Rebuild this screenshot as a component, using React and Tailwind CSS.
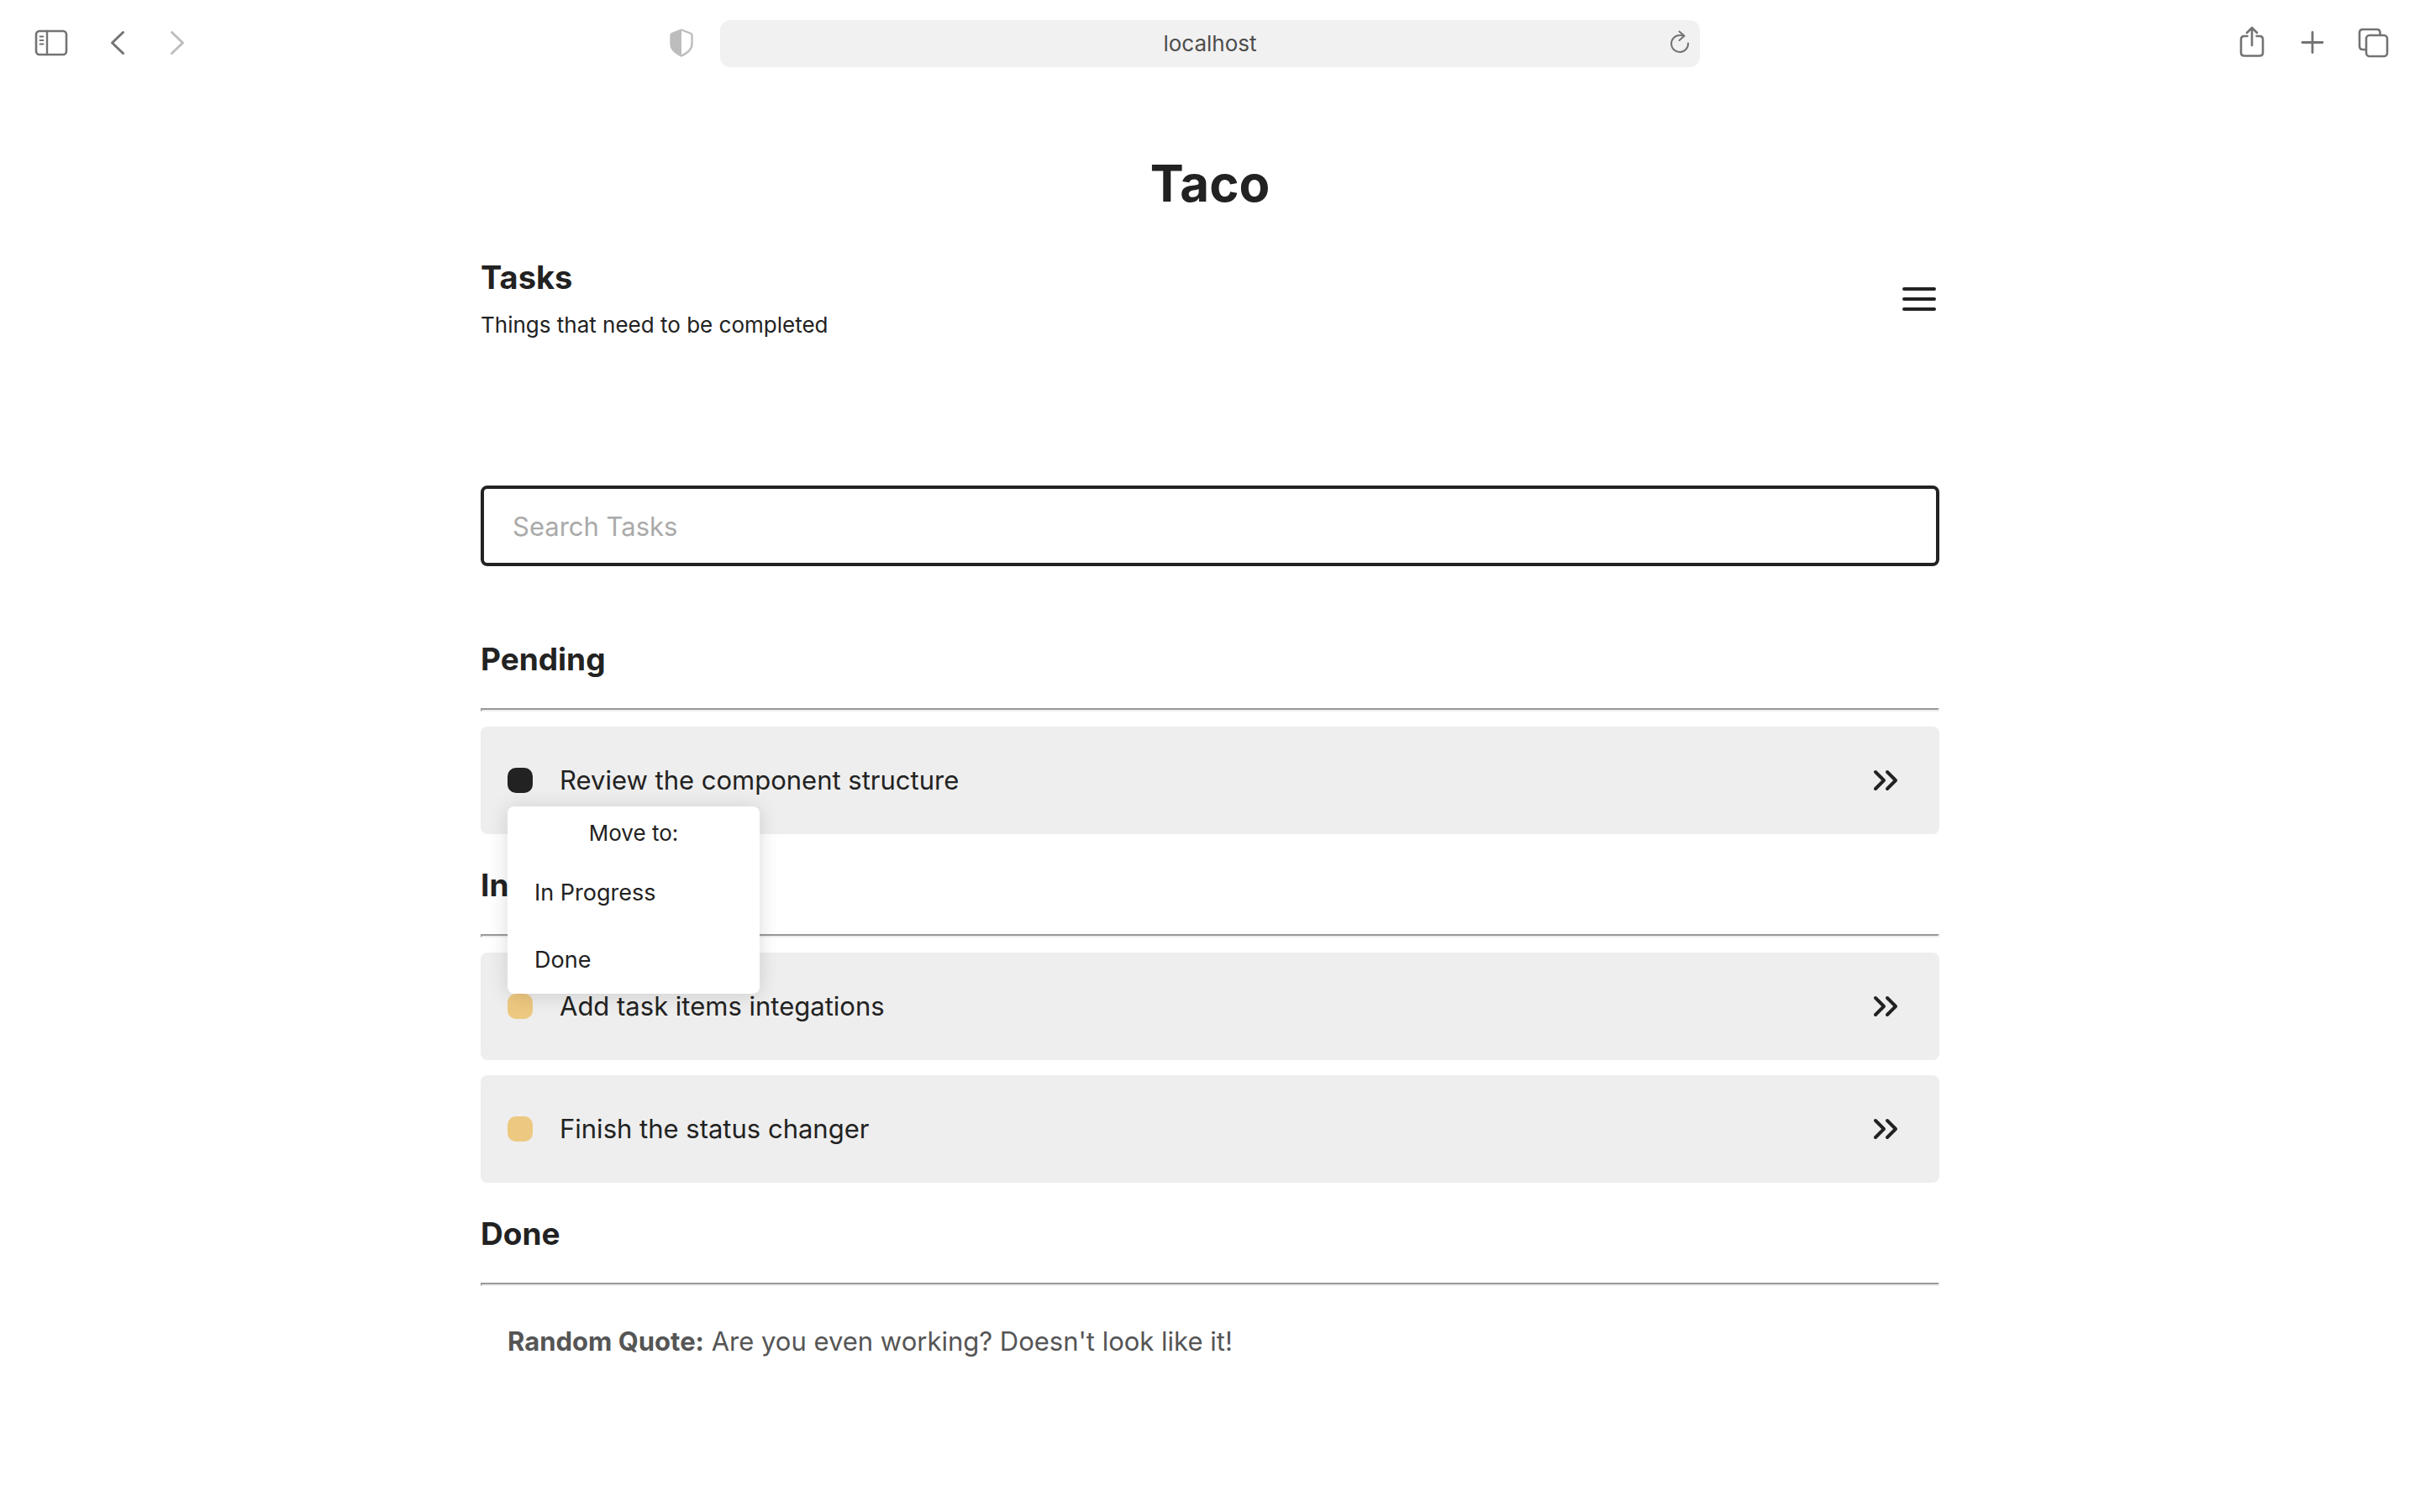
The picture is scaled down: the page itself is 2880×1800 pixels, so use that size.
import { ChevronsRight } from "lucide-react";

function ToolButton({ label, className = "", children }) {
  return (
    <button type="button" aria-label={label} className={`flex shrink-0 items-center justify-center ${className}`}>
      {children}
    </button>
  );
}

function BrowserBar() {
  return (
    <header className="grid h-[104px] grid-cols-[1fr_minmax(0,1166px)_1fr] items-center text-[#737373]">
      <div className="flex items-center gap-[31px] pb-[2px] pl-[33px]">
        <ToolButton label="Show sidebar" className="size-14">
          <svg width="40" height="32" viewBox="0 0 40 32" fill="none" stroke="currentColor" strokeLinecap="round">
            <rect x="2" y="2" width="36" height="28" rx="4" strokeWidth="2.6" />
            <path d="M15 2v28" strokeWidth="2.4" />
            <path d="M6.500 8.500h4M6.500 13h4M6.500 17.500h4" strokeWidth="1.8" />
          </svg>
        </ToolButton>
        <ToolButton label="Back" className="h-14 w-10">
          <svg width="20" height="32" viewBox="0 0 20 32" fill="none" stroke="currentColor" strokeWidth="3" strokeLinecap="round" strokeLinejoin="round">
            <path d="M16.500 3.500 3.500 16l13 12.500" />
          </svg>
        </ToolButton>
        <ToolButton label="Forward" className="h-14 w-10 text-[#bdbdbd]">
          <svg width="20" height="32" viewBox="0 0 20 32" fill="none" stroke="currentColor" strokeWidth="3" strokeLinecap="round" strokeLinejoin="round">
            <path d="M3.500 3.500 16.500 16l-13 12.500" />
          </svg>
        </ToolButton>
        <ToolButton label="Privacy report" className="mr-5 ml-auto size-13 text-[#bdbdbd]">
          <svg width="28" height="34" viewBox="0 0 28 34">
            <path d="M14 1.500 25.500 6q1 .500 1 2V18c0 7-5 10.500-12.500 14.500C6.500 28.500 1.500 25 1.500 18V8q0-1.500 1-2Z" fill="none" stroke="currentColor" strokeWidth="2.400" strokeLinejoin="round" />
            <path d="M14 1.500 2.500 6q-1 .500-1 2V18c0 7 5 10.500 12.500 14.500Z" fill="currentColor" />
          </svg>
        </ToolButton>
      </div>
      <div className="relative">
        <input
          type="text"
          aria-label="Address"
          defaultValue="localhost"
          className="block h-14 w-full rounded-xl bg-[#f1f1f1] pb-[2px] text-center text-[26px] text-[#4d4d4d] outline-none"
        />
        <ToolButton label="Reload" className="absolute inset-y-0 right-1 w-10">
          <svg width="24" height="32" viewBox="0 0 24 32" fill="none" stroke="currentColor" strokeWidth="2" strokeLinecap="round" strokeLinejoin="round">
            <path d="M22 15.500A10 10 0 1 1 12 6q2.500 0 5 .600" />
            <path d="m11.500 1.500 6 5.200-6 5.300" />
          </svg>
        </ToolButton>
      </div>
      <div className="flex items-center justify-end gap-4 pr-7 pb-[2px]">
        <ToolButton label="Share" className="size-14">
          <svg width="32" height="40" viewBox="0 0 32 40" fill="none" stroke="currentColor" strokeWidth="2.600" strokeLinecap="round" strokeLinejoin="round">
            <path d="M10.500 12H7q-4 0-4 4v15.500q0 4 4 4h18q4 0 4-4V16q0-4-4-4h-3.500" />
            <path d="M16 23V2.500M10 8l6-6 6 6" />
          </svg>
        </ToolButton>
        <ToolButton label="New tab" className="size-14">
          <svg width="32" height="32" viewBox="0 0 32 32" fill="none" stroke="currentColor" strokeWidth="2.800" strokeLinecap="round">
            <path d="M16 3.500v24M4 15.500h24" />
          </svg>
        </ToolButton>
        <ToolButton label="Show all tabs" className="size-14">
          <svg width="38" height="36" viewBox="0 0 38 36" fill="none" stroke="currentColor" strokeWidth="2.600" strokeLinejoin="round">
            <path d="M10.500 26H7q-4 0-4-4V6q0-4 4-4h16.500q4 0 4 4v3" />
            <rect x="11" y="9" width="25" height="25" rx="4" />
          </svg>
        </ToolButton>
      </div>
    </header>
  );
}

function StatusMenu() {
  return (
    <div role="menu" aria-label="Move to" className="absolute top-full left-0 z-10 mt-4 w-[300px] rounded-lg bg-white leading-8 shadow-[0_2px_24px_rgba(0,0,0,0.14)]">
      <p className="pt-4 pb-[15px] text-center text-[26px]">Move to:</p>
      <button type="button" role="menuitem" className="flex h-20 w-full items-center px-8 text-[27px]">In Progress</button>
      <button type="button" role="menuitem" className="flex h-20 w-full items-center px-8 text-[27px]">Done</button>
    </div>
  );
}

function Task({ title, color, open }) {
  return (
    <li className="flex h-32 items-center rounded-lg bg-[#eeeeee] pr-10 pl-8">
      <div className="relative mr-8 size-[30px]">
        <button type="button" aria-label={`Change status of ${title}`} aria-expanded={!!open} className={`block size-full rounded-[10px] ${color}`} />
        {open && <StatusMenu />}
      </div>
      <span className="flex-1 text-[31px] leading-10">{title}</span>
      <button type="button" aria-label={`Open ${title}`}>
        <ChevronsRight size={48} strokeWidth={2} />
      </button>
    </li>
  );
}

function Section({ title, children }) {
  return (
    <section>
      <h3 className="pt-[39px] text-[37px] leading-11 font-bold">{title}</h3>
      <hr className="mt-9 mb-[18px] h-1 border-2 border-t-[#999999] border-r-[#eeeeee] border-b-[#eeeeee] border-l-[#999999]" />
      <ul className="flex flex-col gap-[18px]">{children}</ul>
    </section>
  );
}

export default function App() {
  return (
    <div className="min-h-screen bg-white font-['Inter','Liberation_Sans',sans-serif] text-[#222222]">
      <BrowserBar />
      <main className="mx-auto max-w-[1736px]">
        <h1 className="pt-[74px] text-center text-[60px] leading-20 font-bold">Taco</h1>
        <div className="mt-[38px] flex items-center justify-between">
          <div className="pb-[6px]">
            <h2 className="text-[38px] leading-[68px] font-bold">Tasks</h2>
            <p className="text-[26px] leading-[46px]">Things that need to be completed</p>
          </div>
          <button type="button" aria-label="Menu">
            <svg width="48" height="48" viewBox="0 0 24 24" fill="none" stroke="currentColor" strokeWidth="2" strokeLinecap="round">
              <path d="M3 6h18M3 12h18M3 18h18" />
            </svg>
          </button>
        </div>
        <input
          type="search"
          aria-label="Search Tasks"
          placeholder="Search Tasks"
          className="mt-[162px] mb-[50px] block h-24 w-full rounded-lg border-4 border-[#222222] px-[34px] text-[31px] outline-none placeholder:text-[#aaaaaa]"
        />
        <Section title="Pending">
          <Task title="Review the component structure" color="bg-[#222222]" open />
        </Section>
        <Section title="In Progress">
          <Task title="Add task items integations" color="bg-[#edc880]" />
          <Task title="Finish the status changer" color="bg-[#edc880]" />
        </Section>
        <Section title="Done" />
        <p className="mt-7 px-8 text-[31px] leading-10 text-[#555555]">
          <strong className="font-bold">Random Quote:</strong> Are you even working? Doesn't look like it!
        </p>
      </main>
    </div>
  );
}
